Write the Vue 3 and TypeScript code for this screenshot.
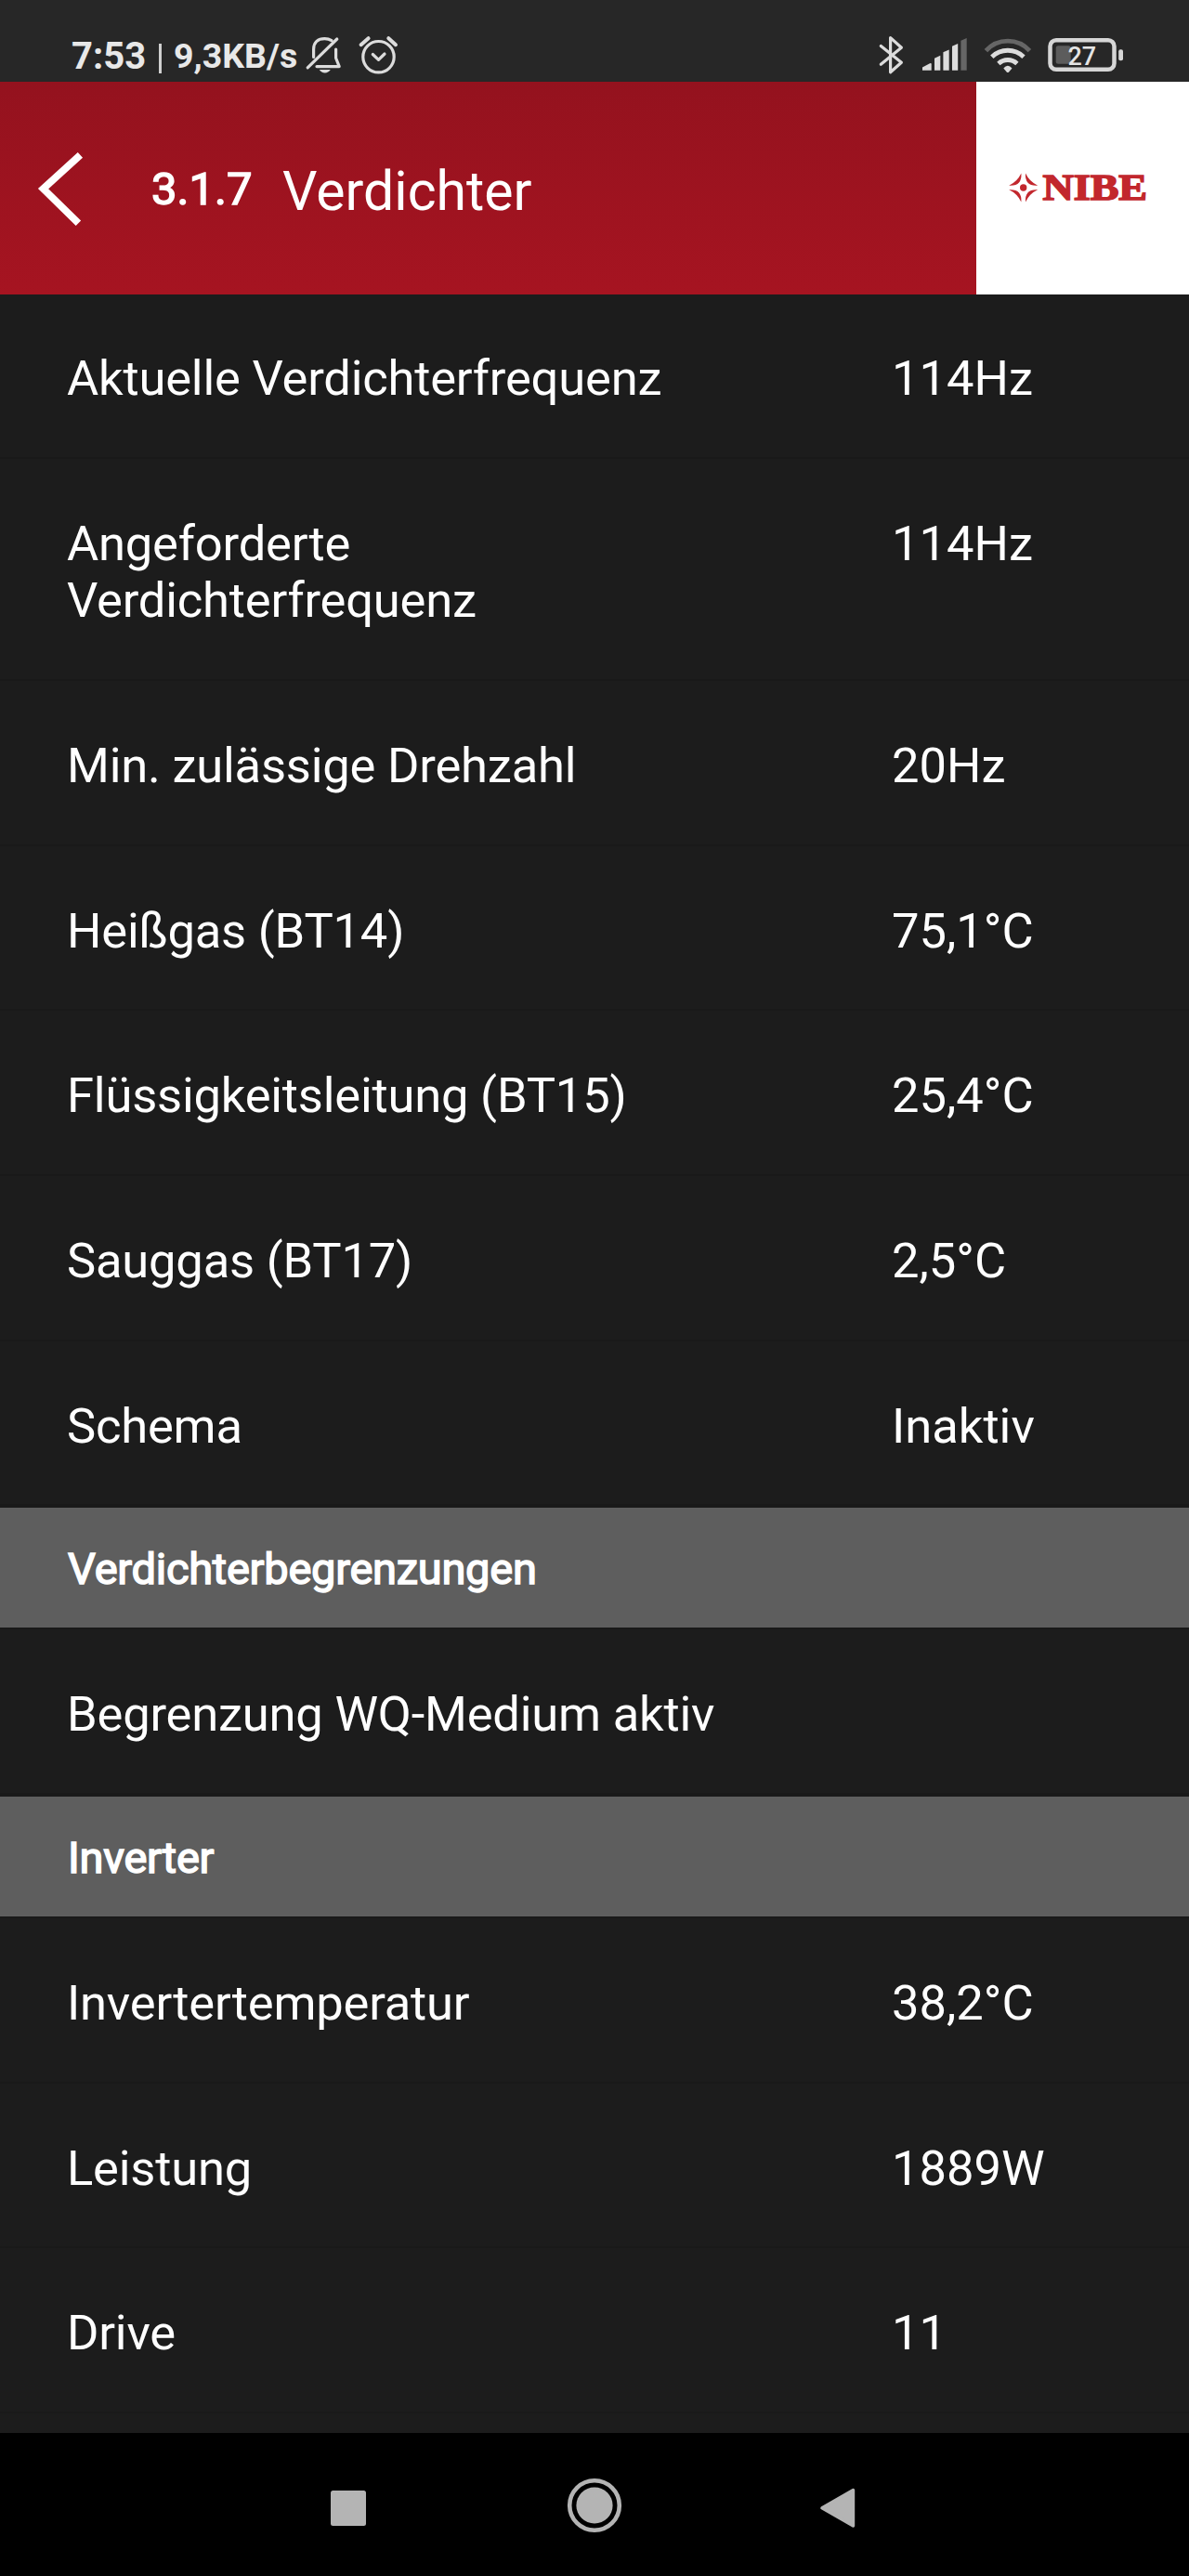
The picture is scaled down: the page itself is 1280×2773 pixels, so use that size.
<script setup lang="ts">
interface Entry {
  kind: 'row' | 'section'
  label: string
  value?: string
}

const entries: Entry[] = [
  { kind: 'row', label: 'Aktuelle Verdichterfrequenz', value: '114Hz' },
  { kind: 'row', label: 'Angeforderte Verdichterfrequenz', value: '114Hz' },
  { kind: 'row', label: 'Min. zulässige Drehzahl', value: '20Hz' },
  { kind: 'row', label: 'Heißgas (BT14)', value: '75,1°C' },
  { kind: 'row', label: 'Flüssigkeitsleitung (BT15)', value: '25,4°C' },
  { kind: 'row', label: 'Sauggas (BT17)', value: '2,5°C' },
  { kind: 'row', label: 'Schema', value: 'Inaktiv' },
  { kind: 'section', label: 'Verdichterbegrenzungen' },
  { kind: 'row', label: 'Begrenzung WQ-Medium aktiv' },
  { kind: 'section', label: 'Inverter' },
  { kind: 'row', label: 'Invertertemperatur', value: '38,2°C' },
  { kind: 'row', label: 'Leistung', value: '1889W' },
  { kind: 'row', label: 'Drive', value: '11' },
]
</script>

<template>
  <div class="screen">
    <div class="status">
      <div class="status-left">
        <span class="clock">7:53</span>
        <span class="bar"></span>
        <span class="speed">9,3KB/s</span>
        <svg class="bell" width="42" height="44" viewBox="328 36 42 44" fill="none" stroke="#dcdcdc" stroke-width="3.2" stroke-linecap="round" stroke-linejoin="round">
          <path d="M337.6 61.5V53C337.6 45.5 342.5 41.6 349.5 41.6C352.5 41.6 355 42.4 357 43.6" />
          <path d="M361.6 53V62.5L365.2 71.6H341" />
          <path d="M331.2 72.8L362.8 42" />
          <path d="M343.8 75H355.8Q353.5 78.4 349.8 78.4Q346 78.4 343.8 75Z" fill="#dcdcdc" stroke="none" />
        </svg>
        <svg class="alarm" width="44" height="44" viewBox="385 36 44 44" fill="none" stroke="#dcdcdc" stroke-width="3.2" stroke-linecap="round" stroke-linejoin="round">
          <circle cx="407.5" cy="61.2" r="16.7" />
          <path d="M401.3 58.5L407.5 64.3L414 58" />
          <path d="M388.6 48.2L396.6 41.2M418.3 41.2L426 48.2" stroke-width="4" />
        </svg>
      </div>
      <div class="status-right">
        <svg width="28" height="44" viewBox="946 38 28 44" fill="none" stroke="#dcdcdc" stroke-width="3.2" stroke-linecap="round" stroke-linejoin="round">
          <path d="M948.3 49.5L970.4 67.3L958.6 77.8V40.6L970.4 51.2L948.3 69.2" />
        </svg>
        <svg class="signal" width="49" height="44" viewBox="992 38 49 44" fill="#dcdcdc">
          <path d="M993 75.7V72.6L1001 68.2Q1002.7 67.6 1002.7 69V75.7Z" />
          <path d="M1006 75.7V62.8L1012.3 59.8V75.7Z" />
          <path d="M1015.4 75.7V56.2L1021.7 53.4V75.7Z" />
          <path d="M1025 75.7V49.8L1031.2 47V75.7Z" />
          <path d="M1034.4 75.7V43.8L1040.7 41V75.7Z" fill="#666" />
        </svg>
        <svg class="wifi" width="52" height="44" viewBox="1058.5 38 52 44" fill="none" stroke="#dcdcdc" stroke-width="4.8">
          <path d="M1060.9 54.6A31.5 31.5 0 0 1 1107.9 54.6" stroke="#666" />
          <path d="M1067.3 61.2A24.5 24.5 0 0 1 1101.5 61.2" />
          <path d="M1074.4 68.5A14.5 14.5 0 0 1 1094.4 68.5" />
          <path d="M1079.8 73.6Q1084.4 67.8 1089 73.6L1085.6 77.6Q1084.4 78.6 1083.2 77.6Z" fill="#dcdcdc" stroke="none" />
        </svg>
        <svg class="battery" width="83" height="44" viewBox="1128 38 83 44">
          <rect x="1130.5" y="43.2" width="69" height="31.6" rx="6.5" fill="none" stroke="#d6d6d6" stroke-width="4.5" />
          <rect x="1136.7" y="49.2" width="16" height="19.6" rx="2.5" fill="#5c5c5c" />
          <rect x="1204.2" y="53.2" width="4.8" height="12" rx="2" fill="#d6d6d6" />
          <text x="1149.4" y="70" class="level">27</text>
        </svg>
      </div>
    </div>

    <header class="header">
      <svg class="back" width="50" height="84" viewBox="40 160 50 84" fill="none" stroke="#fff" stroke-width="7.8">
        <path d="M86.4 165.9L46.6 202.2L84.4 239.2" />
      </svg>
      <span class="code">3.1.7</span>
      <span class="title">Verdichter</span>
      <div class="brand">
        <svg width="160" height="60" viewBox="1085 172 160 60">
          <g transform="translate(1101.7 202)" fill="#c2272d">
            <path d="M-2.3 -15.5Q-6.5 -6.5 -15.5 -2.3Q-1.3 -1.3 -2.3 -15.5Z" />
            <path d="M2.3 -15.5Q6.5 -6.5 15.5 -2.3Q1.3 -1.3 2.3 -15.5Z" />
            <path d="M-2.3 15.5Q-6.5 6.5 -15.5 2.3Q-1.3 1.3 -2.3 15.5Z" />
            <path d="M2.3 15.5Q6.5 6.5 15.5 2.3Q1.3 1.3 2.3 15.5Z" />
            <circle r="3.7" />
          </g>
          <text x="1122.5" y="215.2" textLength="112.5" lengthAdjust="spacingAndGlyphs" class="brand-name">NIBE</text>
        </svg>
      </div>
    </header>

    <main class="list">
      <template v-for="entry in entries" :key="entry.label">
        <h2 v-if="entry.kind === 'section'" class="section">{{ entry.label }}</h2>
        <div v-else class="row">
          <span class="label">{{ entry.label }}</span>
          <span class="value">{{ entry.value }}</span>
        </div>
      </template>
    </main>

    <nav class="nav">
      <svg class="recent" width="38" height="38" viewBox="0 0 38 38"><rect width="38" height="38" rx="2.5" fill="#b4b4b4" /></svg>
      <svg class="home" width="60" height="60" viewBox="-30 -30 60 60">
        <circle r="26.8" fill="none" stroke="#b4b4b4" stroke-width="4.6" />
        <circle r="19.6" fill="#b4b4b4" />
      </svg>
      <svg class="prev" width="38" height="44" viewBox="0 0 38 44">
        <path d="M2 21.8L35.5 2.5V41.1Z" fill="#b4b4b4" stroke="#b4b4b4" stroke-width="3.4" stroke-linejoin="round" />
      </svg>
    </nav>
  </div>
</template>

<style>
body {
  background: #1c1c1c;
}
</style>

<style scoped>
.screen {
  width: 1280px;
  height: 2773px;
  display: flex;
  flex-direction: column;
  overflow: hidden;
  background: #1c1c1c;
  color: #fff;
  font-family: Roboto, sans-serif;
}
.status {
  flex: none;
  height: 88px;
  box-sizing: border-box;
  display: flex;
  justify-content: space-between;
  padding: 36px 69px 0 77px;
  background: #272727;
  color: #e8e8e8;
}
.status-left {
  display: flex;
  white-space: nowrap;
}
.clock {
  width: 94px;
  font-size: 40px;
  font-weight: 700;
  line-height: 49px;
}
.bar {
  width: 3px;
  height: 32px;
  margin-top: 11px;
  background: #cfcfcf;
}
.speed {
  width: 141px;
  margin-left: 13px;
  font-size: 37.5px;
  font-weight: 700;
  line-height: 49px;
}
.alarm {
  margin-left: 15px;
}
.status-right {
  display: flex;
  padding-top: 2px;
}
.signal {
  margin-left: 18px;
}
.wifi {
  margin-left: 17.5px;
}
.battery {
  margin-left: 17.5px;
}
.level {
  font: 500 27px Roboto, sans-serif;
  fill: #e4e4e4;
}
.header {
  flex: none;
  height: 229px;
  display: flex;
  align-items: center;
  background: linear-gradient(#94121e, #a61421);
}
.back {
  margin-left: 40px;
}
.code {
  width: 140px;
  margin-left: 73px;
  padding-top: 3px;
  font-size: 49px;
  line-height: 60px;
  -webkit-text-stroke: 1.5px #fff;
}
.title {
  margin-left: 1px;
  padding-top: 7px;
  font-size: 59px;
  line-height: 68px;
}
.brand {
  width: 229px;
  height: 229px;
  margin-left: auto;
  box-sizing: border-box;
  padding: 84px 0 0 34px;
  background: #fff;
}
.brand svg {
  display: block;
}
.brand-name {
  font: 700 40px "Liberation Serif", serif;
  fill: #c2272d;
  stroke: #c2272d;
  stroke-width: 1.6px;
}
.list {
  flex: 1;
  min-height: 0;
  overflow: hidden;
}
.row {
  display: flex;
  padding: 61px 0 53.2px 72px;
  border-bottom: 2px solid #191919;
  font-size: 52.5px;
  line-height: 61.5px;
}
.row:first-child {
  padding-top: 60px;
}
.label {
  width: 888px;
  padding-right: 140px;
  box-sizing: border-box;
  letter-spacing: -0.2px;
}
.section {
  height: 129px;
  margin: 0;
  box-sizing: content-box;
  padding-left: 73px;
  border-top: 2px solid #191919;
  border-bottom: 2px solid #191919;
  background: #5e5e5e;
  background-clip: padding-box;
  font-size: 47px;
  font-weight: 400;
  line-height: 131px;
  letter-spacing: -0.27px;
  -webkit-text-stroke: 1.5px #fff;
}
.nav {
  flex: none;
  height: 154px;
  display: flex;
  align-items: center;
  background: #000;
}
.recent {
  margin: 7px 0 0 355.5px;
}
.home {
  margin: 1px 0 0 216px;
}
.prev {
  margin: 8px 0 0 213px;
}
</style>
